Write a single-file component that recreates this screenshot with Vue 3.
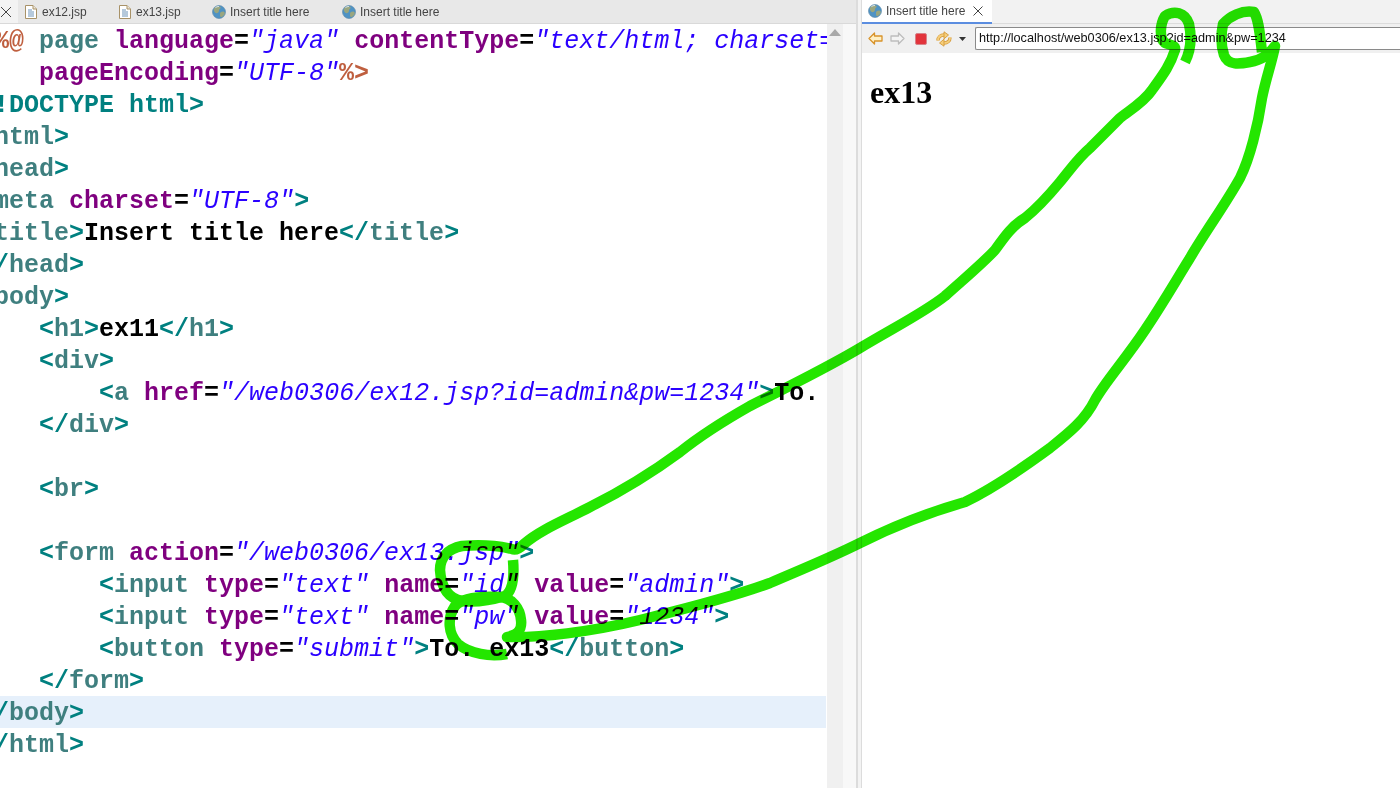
<script setup>
const L = {
  b: 'br', t: 'tg', a: 'at', v: 'va', x: 'tx', j: 'js', d: 'dt'
}
const raw = [
  [['j', '<%@'], ['x', ' '], ['t', 'page'], ['x', ' '], ['a', 'language'], ['x', '='], ['v', '"java"'], ['x', ' '], ['a', 'contentType'], ['x', '='], ['v', '"text/html; charset=UTF-8"']],
  [['x', '    '], ['a', 'pageEncoding'], ['x', '='], ['v', '"UTF-8"'], ['j', '%>']],
  [['d', '<!'], ['d', 'DOCTYPE html'], ['b', '>']],
  [['b', '<'], ['t', 'html'], ['b', '>']],
  [['b', '<'], ['t', 'head'], ['b', '>']],
  [['b', '<'], ['t', 'meta'], ['x', ' '], ['a', 'charset'], ['x', '='], ['v', '"UTF-8"'], ['b', '>']],
  [['b', '<'], ['t', 'title'], ['b', '>'], ['x', 'Insert title here'], ['b', '</'], ['t', 'title'], ['b', '>']],
  [['b', '</'], ['t', 'head'], ['b', '>']],
  [['b', '<'], ['t', 'body'], ['b', '>']],
  [['x', '    '], ['b', '<'], ['t', 'h1'], ['b', '>'], ['x', 'ex11'], ['b', '</'], ['t', 'h1'], ['b', '>']],
  [['x', '    '], ['b', '<'], ['t', 'div'], ['b', '>']],
  [['x', '        '], ['b', '<'], ['t', 'a'], ['x', ' '], ['a', 'href'], ['x', '='], ['v', '"/web0306/ex12.jsp?id=admin&pw=1234"'], ['b', '>'], ['x', 'To. ex12'], ['b', '</'], ['t', 'a'], ['b', '>']],
  [['x', '    '], ['b', '</'], ['t', 'div'], ['b', '>']],
  [['x', ' ']],
  [['x', '    '], ['b', '<'], ['t', 'br'], ['b', '>']],
  [['x', ' ']],
  [['x', '    '], ['b', '<'], ['t', 'form'], ['x', ' '], ['a', 'action'], ['x', '='], ['v', '"/web0306/ex13.jsp"'], ['b', '>']],
  [['x', '        '], ['b', '<'], ['t', 'input'], ['x', ' '], ['a', 'type'], ['x', '='], ['v', '"text"'], ['x', ' '], ['a', 'name'], ['x', '='], ['v', '"id"'], ['x', ' '], ['a', 'value'], ['x', '='], ['v', '"admin"'], ['b', '>']],
  [['x', '        '], ['b', '<'], ['t', 'input'], ['x', ' '], ['a', 'type'], ['x', '='], ['v', '"text"'], ['x', ' '], ['a', 'name'], ['x', '='], ['v', '"pw"'], ['x', ' '], ['a', 'value'], ['x', '='], ['v', '"1234"'], ['b', '>']],
  [['x', '        '], ['b', '<'], ['t', 'button'], ['x', ' '], ['a', 'type'], ['x', '='], ['v', '"submit"'], ['b', '>'], ['x', 'To. ex13'], ['b', '</'], ['t', 'button'], ['b', '>']],
  [['x', '    '], ['b', '</'], ['t', 'form'], ['b', '>']],
  [['b', '</'], ['t', 'body'], ['b', '>']],
  [['b', '</'], ['t', 'html'], ['b', '>']]
]
const lines = raw.map((toks, i) => ({
  id: i,
  current: i === 21,
  toks: toks.map(([k, s]) => ({ c: L[k], s }))
}))
const editorTabs = [
  { name: 'ex12.jsp', kind: 'file', w: 94 },
  { name: 'ex13.jsp', kind: 'file', w: 93 },
  { name: 'Insert title here', kind: 'globe', w: 130 },
  { name: 'Insert title here', kind: 'globe', w: 130 }
]
const strokeA = 'M1185 62C1190 52 1192 38 1189 24C1185 12 1174 10 1165 16C1160 24 1159 38 1165 43C1172 45 1176 46 1175 50C1170 66 1162 76 1152 90C1144 102 1130 110 1120 118C1110 128 1100 138 1090 148C1078 158 1070 170 1060 182C1050 194 1040 206 1025 218C1012 226 1005 236 995 250C982 264 965 278 945 296C925 312 895 327 860 348C830 366 790 386 750 406C720 423 700 436 680 452C650 474 620 492 590 507C565 520 540 530 524 544C520 548 516 551 512 549C495 545 475 545 462 546C447 549 440 558 440 570C441 586 447 598 462 601C478 603 495 599 505 596C514 590 514 572 513 560'
const strokeB = 'M507 654C490 657 470 654 458 644C448 634 447 618 455 606C462 598 480 596 500 597C512 598 520 608 521 620C522 628 520 634 507 637C540 638 590 632 640 620C680 610 730 598 770 583C800 570 830 558 860 543C890 528 930 512 965 502C990 490 1020 470 1050 448C1070 432 1085 420 1095 400C1105 382 1125 360 1145 330C1165 300 1175 282 1190 258C1205 232 1225 205 1240 178C1250 158 1258 125 1262 98C1266 78 1272 62 1275 46C1268 55 1262 60 1250 62C1240 64 1228 66 1224 55C1221 46 1221 34 1223 24C1230 16 1242 10 1254 12C1259 20 1260 36 1262 52'
</script>

<template>
  <div class="screen">
    <section class="left">
      <div class="tabs">
        <div class="closer">
          <svg width="12" height="12" viewBox="0 0 12 12"><path d="M1 1l10 10M11 1L1 11" stroke="#444" fill="none" stroke-width="1" /></svg>
        </div>
        <div v-for="(t, i) in editorTabs" :key="i" class="tab" :class="t.kind" :style="{ width: t.w + 'px' }">
          <svg v-if="t.kind === 'file'" class="ficon" width="12" height="14" viewBox="0 0 12 14">
            <path d="M.5.5h7.500l3.500 3.500v9.500H.5z" fill="#fff" stroke="#a89268" />
            <path d="M8 .5V4h3.500" fill="#efe8d8" stroke="#a89268" />
            <path d="M3 5h4M3 7h6M3 9h6M3 11h6" stroke="#6d93b8" />
          </svg>
          <svg v-else class="gicon" width="14" height="14" viewBox="0 0 14 14">
            <circle cx="7" cy="7" r="6.500" fill="#4f93c4" stroke="#5b86a6" stroke-width=".6" />
            <path d="M2.500 3c1.500-2 5-2.500 6-1 .8 1.300-1.500 1.800-1.500 3.800S4.500 9 3 7.500 1.500 4.300 2.500 3zM9 7c1.500-1 3.800-.6 3.800 1 0 1.800-1.800 3.700-3.300 4.100S8 10.500 8 9.500 8 7.600 9 7z" fill="#9aa67f" />
            <path d="M3.500 2.600c1-.8 2.500-1.200 3.500-1" stroke="#e4eef5" fill="none" />
          </svg>
          <span>{{ t.name }}</span>
        </div>
      </div>
      <div class="body">
        <div class="editor">
          <div v-for="l in lines" :key="l.id" class="line" :class="{ current: l.current }">
            <span class="code"><span v-for="(t, j) in l.toks" :key="j" :class="t.c">{{ t.s }}</span></span>
          </div>
        </div>
        <div class="ruler">
          <svg class="up" width="14" height="9" viewBox="0 0 14 9"><path d="M7 1l6 7H1z" fill="#a8a8a8" /></svg>
        </div>
        <div class="overview"></div>
      </div>
    </section>
    <div class="sash"></div>
    <section class="right">
      <div class="rtabs">
        <div class="rtab">
          <svg width="14" height="14" viewBox="0 0 14 14">
            <circle cx="7" cy="7" r="6.500" fill="#4f93c4" stroke="#5b86a6" stroke-width=".6" />
            <path d="M2.500 3c1.500-2 5-2.500 6-1 .8 1.300-1.500 1.800-1.500 3.800S4.500 9 3 7.500 1.500 4.300 2.500 3zM9 7c1.500-1 3.800-.6 3.800 1 0 1.800-1.800 3.700-3.300 4.100S8 10.500 8 9.500 8 7.600 9 7z" fill="#9aa67f" />
            <path d="M3.500 2.600c1-.8 2.500-1.200 3.500-1" stroke="#e4eef5" fill="none" />
          </svg>
          <span>Insert title here</span>
          <svg class="rclose" width="10" height="10" viewBox="0 0 10 10"><path d="M.5.5l9 9M9.500.5l-9 9" stroke="#444" fill="none" /></svg>
        </div>
      </div>
      <div class="toolbar">
        <svg class="tb back" width="15" height="13" viewBox="0 0 15 13"><path d="M6.500 1L1 6.500 6.500 12V9h7.500V4H6.500z" fill="#fff0c4" stroke="#d8932a" stroke-width="1.300" stroke-linejoin="round" /></svg>
        <svg class="tb fwd" width="15" height="13" viewBox="0 0 15 13"><path d="M8.500 1L14 6.500 8.500 12V9H1V4h7.500z" fill="#f4f4f4" stroke="#bdbdbd" stroke-width="1.300" stroke-linejoin="round" /></svg>
        <svg class="tb stop" width="12" height="12" viewBox="0 0 12 12"><rect x=".5" y=".5" width="11" height="11" rx="1.500" fill="#e2343c" stroke="#d8838a" /></svg>
        <svg class="tb refresh" width="16" height="16" viewBox="0 0 16 16">
          <g id="half">
            <path d="M2 9.500C2 6 4.500 4 8 4" fill="none" stroke="#d59a3a" stroke-width="3.400" />
            <path d="M2 9.500C2 6 4.500 4 8 4" fill="none" stroke="#f6cf7c" stroke-width="1.800" />
            <path d="M8 .8L12.500 4 8 7.800z" fill="#f6cf7c" stroke="#d59a3a" stroke-width=".9" stroke-linejoin="round" />
          </g>
          <g transform="rotate(180 8 8)">
            <path d="M2 9.500C2 6 4.500 4 8 4" fill="none" stroke="#d59a3a" stroke-width="3.400" />
            <path d="M2 9.500C2 6 4.500 4 8 4" fill="none" stroke="#f6cf7c" stroke-width="1.800" />
            <path d="M8 .8L12.500 4 8 7.800z" fill="#f6cf7c" stroke="#d59a3a" stroke-width=".9" stroke-linejoin="round" />
          </g>
        </svg>
        <svg class="tb caret" width="7" height="4" viewBox="0 0 7 4"><path d="M0 0h7L3.500 4z" fill="#333" /></svg>
        <div class="address">http://localhost/web0306/ex13.jsp?id=admin&amp;pw=1234</div>
      </div>
      <div class="page"><h1>ex13</h1></div>
    </section>
    <svg class="ink" width="1400" height="788" viewBox="0 0 1400 788">
      <path :d="strokeA" />
      <path :d="strokeB" />
    </svg>
  </div>
</template>

<style scoped>
.screen {
  position: relative;
  display: flex;
  width: 1400px;
  height: 788px;
  overflow: hidden;
  background: #fff;
}
.left {
  display: flex;
  flex-direction: column;
  width: 856px;
  flex: none;
}
.tabs {
  display: flex;
  align-items: center;
  height: 24px;
  flex: none;
  background: #e8e8e8;
  border-bottom: 1px solid #d9d9d9;
  box-sizing: border-box;
  font: 12px "Liberation Sans", sans-serif;
  color: #444;
}
.closer {
  display: flex;
  align-items: center;
  width: 18px;
  height: 23px;
  background: #f3f3f3;
  margin-right: 7px;
  flex: none;
}
.tab {
  display: flex;
  align-items: center;
  flex: none;
  box-sizing: border-box;
}
.ficon { margin-right: 5px; flex: none; }
.gicon { margin-right: 4px; flex: none; }
.body {
  display: flex;
  flex: 1;
  min-height: 0;
}
.editor {
  width: 827px;
  flex: none;
  overflow: hidden;
}
.line {
  height: 32px;
  white-space: pre;
  font: bold 25px/36px "Liberation Mono", monospace;
}
.line.current { background: #e6f0fb; margin-right: 1px; }
.code { display: block; margin-left: -21px; }
.br { color: #008080; }
.tg { color: #3f7f7f; }
.at { color: #7f007f; }
.va { color: #2a00ff; font-style: italic; font-weight: normal; }
.tx { color: #000; }
.js { color: #bf5f3f; }
.dt { color: #008080; }
.ruler {
  width: 16px;
  flex: none;
  background: #f0f0f0;
  position: relative;
}
.up { position: absolute; left: 1px; top: 4px; }
.overview {
  width: 13px;
  flex: none;
  background: #f8f8f8;
}
.sash {
  width: 6px;
  flex: none;
  box-sizing: border-box;
  background: #f3f3f3;
  border-left: 2px solid #dcdcdc;
  border-right: 1px solid #dcdcdc;
}
.right {
  flex: 1;
  display: flex;
  flex-direction: column;
  min-width: 0;
}
.rtabs {
  height: 24px;
  flex: none;
  background: #f2f2f2;
  box-sizing: border-box;
  border-bottom: 1px solid #dcdcdc;
}
.rtab {
  display: flex;
  align-items: center;
  box-sizing: border-box;
  width: 130px;
  height: 24px;
  padding-left: 6px;
  background: #fff;
  border-bottom: 2px solid #5b8de0;
  font: 12px "Liberation Sans", sans-serif;
  color: #444;
}
.rtab span { margin-left: 4px; }
.rclose { margin-left: 8px; }
.toolbar {
  display: flex;
  align-items: center;
  height: 29px;
  flex: none;
  background: #f0f0f0;
  padding-left: 6px;
}
.tb { flex: none; }
.fwd { margin-left: 7px; }
.stop { margin-left: 10px; }
.refresh { margin-left: 9px; }
.caret { margin-left: 7px; }
.address {
  margin-left: 9px;
  flex: 1;
  box-sizing: border-box;
  height: 23px;
  padding-left: 3px;
  background: #fff;
  border: 1px solid #8a8a8a;
  border-right: 0;
  border-radius: 2px 0 0 2px;
  font: 12.7px/21px "Liberation Sans", sans-serif;
  color: #111;
  white-space: nowrap;
}
.page { padding: 0 8px; flex: 1; }
h1 {
  margin: 21px 0 0;
  font: bold 32px/37px "Liberation Serif", serif;
  color: #000;
}
.ink {
  position: absolute;
  left: 0;
  top: 0;
  mix-blend-mode: multiply;
  pointer-events: none;
}
.ink path {
  fill: none;
  stroke: #24e600;
  stroke-width: 10.5;
  stroke-linejoin: round;
  stroke-linecap: butt;
}
</style>
